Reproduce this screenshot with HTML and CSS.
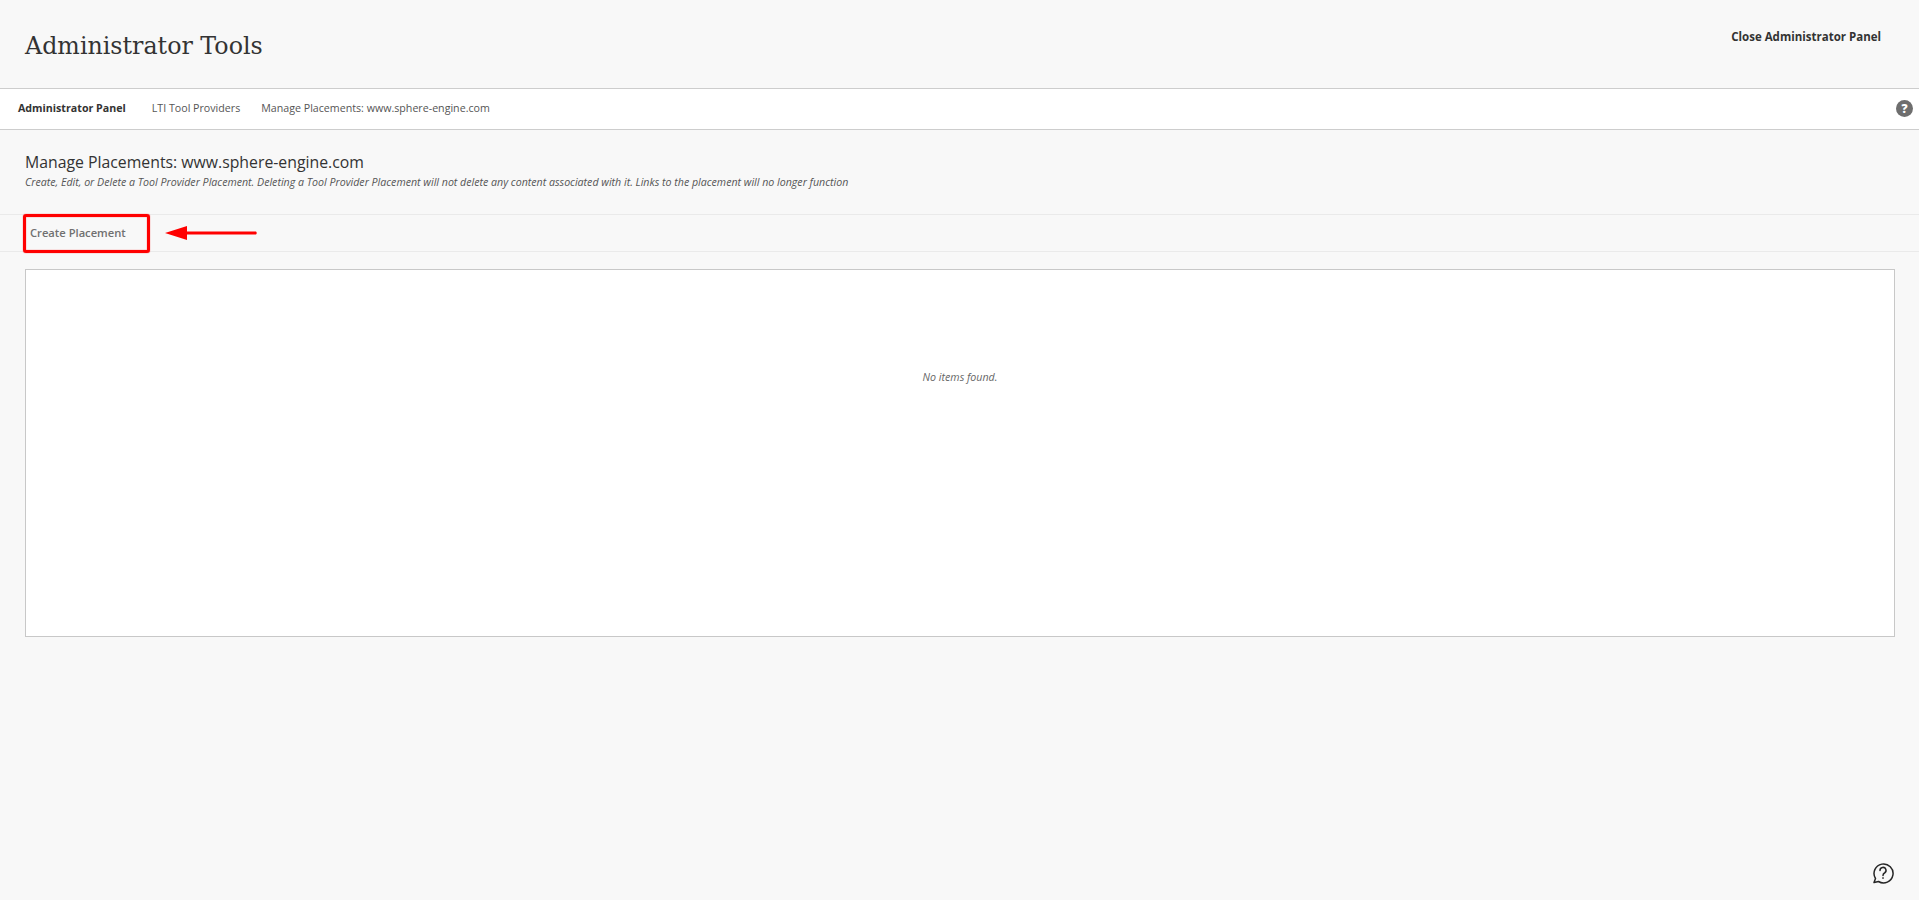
FILE: index.html
```html
<!DOCTYPE html>
<html lang="en">
<head>
  <meta charset="UTF-8" />
  <title>Administrator Tools</title>
  <link rel="stylesheet" href="styles.css">
</head>
<body>
  <header class="top-bar">
    <h1 class="top-title">Administrator Tools</h1>
    <a class="close-link">Close Administrator Panel</a>
  </header>

  <nav class="crumbs">
    <a class="crumb crumb-first">Administrator Panel</a>
    <a class="crumb">LTI Tool Providers</a>
    <a class="crumb">Manage Placements: www.sphere-engine.com</a>
    <span class="help-dot">?</span>
  </nav>

  <section class="page-head">
    <h2 class="page-title">Manage Placements: www.sphere-engine.com</h2>
    <p class="page-desc">Create, Edit, or Delete a Tool Provider Placement. Deleting a Tool Provider Placement will not delete any content associated with it. Links to the placement will no longer function</p>
  </section>

  <div class="action-bar">
    <a class="action-link">Create Placement</a>
    <!-- annotation over the screenshot -->
    <div class="mark-box"></div>
    <svg class="mark-arrow" width="94" height="20" viewBox="0 0 94 20">
      <path d="M1 10 L23 3 L23 8.500 L92 8.500 Q93.500 10 92 11.500 L23 11.500 L23 17 Z" fill="#ff0000"/>
    </svg>
  </div>

  <div class="list-box">
    <p class="empty-msg">No items found.</p>
  </div>

  <svg class="chat-help" width="24" height="24" viewBox="0 0 24 24" fill="none" stroke="#262626">
    <path d="M3 21.500 L4.500 17.500 A9.500 9.500 0 1 1 7.500 20.500 Z" stroke-width="1.500" stroke-linejoin="round"/>
    <path d="M9 9.500 A3 3 0 1 1 13.500 12 Q12 12.800 12 14.500" stroke-width="1.500" stroke-linecap="round"/>
    <circle cx="12" cy="17" r="0.500" fill="#262626" stroke-width="0.800"/>
  </svg>
</body>
</html>
```

FILE: styles.css
```css
html, body {
  height: 100%;
}

body {
  margin: 0;
  position: relative;
  overflow: hidden;
  font-family: "Open Sans", sans-serif;
  font-size: 11px;
  color: #333;
  background-color: #f8f8f8;
}

.top-bar {
  display: flex;
  justify-content: space-between;
  align-items: flex-start;
  height: 89px;
  box-sizing: border-box;
  padding: 0 38px 0 25px;
  border-bottom: 1px solid #cdcdcd;
}

.top-title {
  margin: 28px 0 0;
  font-family: "DejaVu Serif", serif;
  font-size: 23.750px;
  line-height: 37px;
  font-weight: 400;
  color: #333;
}

.close-link {
  margin-top: 28px;
  font-size: 11.500px;
  line-height: 18px;
  font-weight: 700;
  color: #333;
}

.crumbs {
  display: flex;
  align-items: center;
  height: 41px;
  box-sizing: border-box;
  padding: 0 6px 2px 18px;
  background-color: #fff;
  border-bottom: 1px solid #cdcdcd;
}

.crumb {
  margin-right: 21px;
  font-size: 10.670px;
  color: #555;
}

.crumb-first {
  margin-right: 26px;
  font-weight: 700;
  color: #333;
}

.help-dot {
  width: 17px;
  height: 17px;
  margin-left: auto;
  border-radius: 50%;
  background-color: #6e6e6e;
  color: #fff;
  font-size: 12px;
  font-weight: 800;
  line-height: 17px;
  text-align: center;
}

.page-head {
  height: 85px;
  box-sizing: border-box;
  padding: 23px 25px 0;
  border-bottom: 1px solid #eaeaea;
}

.page-title {
  margin: 0;
  font-size: 15.800px;
  line-height: 19px;
  font-weight: 400;
  color: #333;
}

.page-desc {
  margin: 3px 0 0;
  font-size: 10.630px;
  line-height: 15px;
  font-style: italic;
  color: #555;
}

.action-bar {
  position: relative;
  display: flex;
  align-items: center;
  height: 37px;
  box-sizing: border-box;
  padding: 0 0 2px 30px;
  border-bottom: 1px solid #eaeaea;
}

.action-link {
  font-size: 11.200px;
  font-weight: 600;
  color: #707070;
}

.mark-box {
  position: absolute;
  left: 23px;
  top: -1px;
  width: 127px;
  height: 39px;
  box-sizing: border-box;
  border: 3px solid #ff0000;
  border-radius: 3px;
  box-shadow: 0 0 1px #ff0000, inset 0 0 1px #ff0000;
}

.mark-arrow {
  position: absolute;
  left: 164px;
  top: 8px;
}

.list-box {
  display: flex;
  justify-content: center;
  height: 368px;
  box-sizing: border-box;
  margin: 17px 24px 0 25px;
  padding-top: 100px;
  background-color: #fff;
  border: 1px solid #c8c8c8;
}

.empty-msg {
  margin: 0;
  font-size: 10.670px;
  line-height: 15px;
  font-style: italic;
  color: #666;
}

.chat-help {
  position: absolute;
  right: 24px;
  bottom: 15px;
}
```
